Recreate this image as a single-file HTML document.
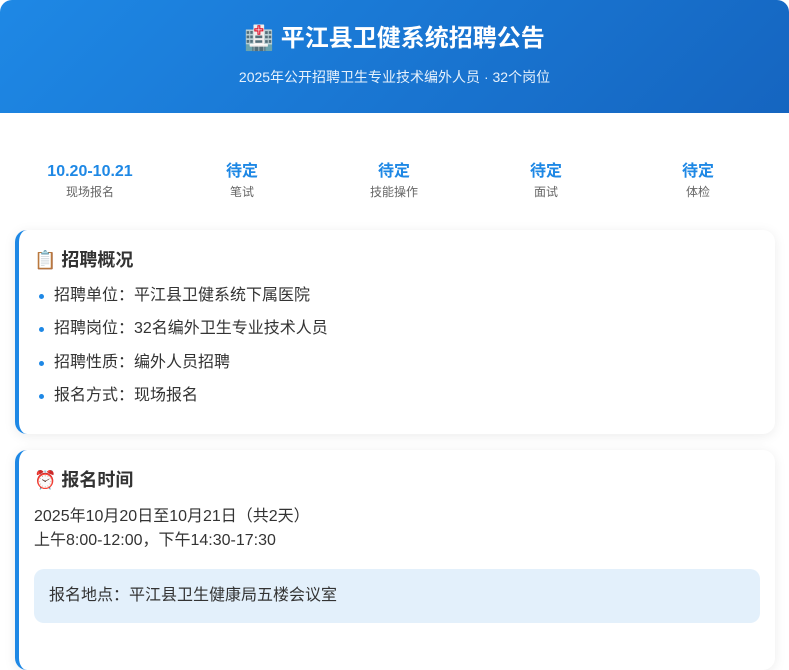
<!DOCTYPE html>
<html><head><meta charset="utf-8"><style>
*{margin:0;padding:0;box-sizing:border-box}
body{width:789px;height:641px;overflow:hidden;background:#fff;font-family:"Liberation Sans","Noto Sans CJK SC",sans-serif;color:#333}
.hd{position:absolute;left:0;top:0;width:789px;height:113px;background:linear-gradient(135deg,#1e88e5,#1565c0);border-radius:12px 12px 0 0;color:#fff;text-align:center}
.hd h1{position:absolute;top:23px;left:0;right:0;font-size:24px;font-weight:bold;line-height:32px}
.hd p{position:absolute;top:67px;left:0;right:0;font-size:14px;line-height:20px;color:#e6f1fc}
.tl{position:absolute;left:14px;top:160px;width:760px;display:flex}
.tl div{flex:1;text-align:center}
.tl b{display:block;font-size:16px;color:#1e88e5;line-height:24px}
.tl span{display:block;font-size:12px;color:#666;line-height:18px;margin-top:-1px}
.card{position:absolute;left:15px;width:760px;background:#fff;border-left:4px solid #1e88e5;border-radius:12px;box-shadow:0 2px 12px rgba(0,0,0,.08)}
.card h2{position:absolute;left:15px;font-size:18px;font-weight:bold;line-height:26px}
.li{position:absolute;left:20px;font-size:16px;line-height:22px}
.li:before{content:"";position:absolute;left:0;top:9px;width:5px;height:5px;border-radius:50%;background:#1e88e5}
.li span{margin-left:15px}
.tx{position:absolute;left:15px;font-size:16px;line-height:24px}
.box{position:absolute;left:15px;top:119px;width:726px;height:54px;background:#e3f0fb;border-radius:10px;font-size:16px;line-height:54px;padding-left:15px}
</style></head><body>
<div class="hd"><h1>🏥 平江县卫健系统招聘公告</h1><p>2025年公开招聘卫生专业技术编外人员 · 32个岗位</p></div>
<div class="tl">
<div><b>10.20-10.21</b><span>现场报名</span></div>
<div><b>待定</b><span>笔试</span></div>
<div><b>待定</b><span>技能操作</span></div>
<div><b>待定</b><span>面试</span></div>
<div><b>待定</b><span>体检</span></div>
</div>
<div class="card" style="top:230px;height:204px">
<h2 style="top:17px">📋 招聘概况</h2>
<div class="li" style="top:55px"><span>招聘单位：平江县卫健系统下属医院</span></div>
<div class="li" style="top:88px"><span>招聘岗位：32名编外卫生专业技术人员</span></div>
<div class="li" style="top:122px"><span>招聘性质：编外人员招聘</span></div>
<div class="li" style="top:155px"><span>报名方式：现场报名</span></div>
</div>
<div class="card" style="top:450px;height:220px">
<h2 style="top:17px">⏰ 报名时间</h2>
<div class="tx" style="top:55px">2025年10月20日至10月21日（共2天）<br>上午8:00-12:00，下午14:30-17:30</div>
<div class="box">报名地点：平江县卫生健康局五楼会议室</div>
</div>
</body></html>
